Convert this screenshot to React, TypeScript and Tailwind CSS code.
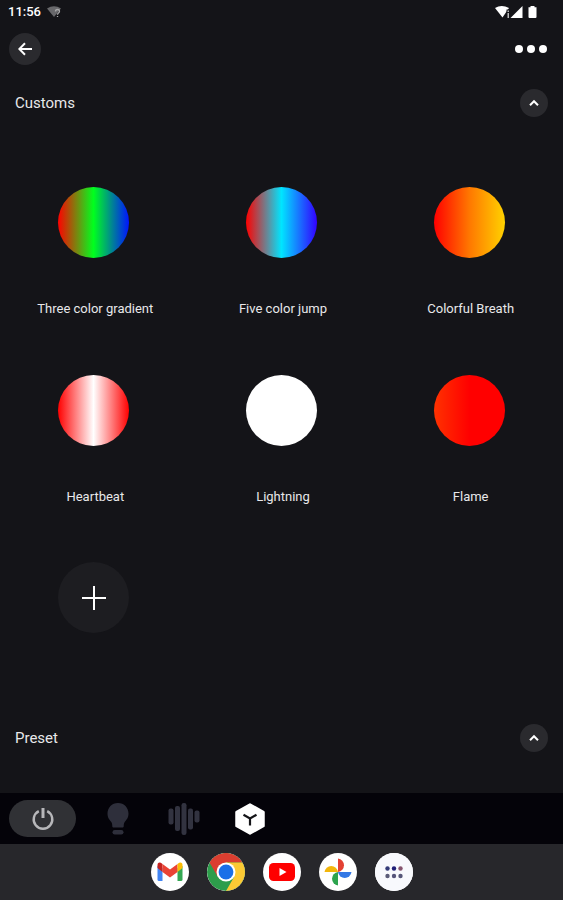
import { useState } from "react";

const effects = [
  { name: "Three color gradient", fill: "bg-[linear-gradient(90deg,#ff0000,#00ff1e_50%,#0014ff)]" },
  { name: "Five color jump", fill: "bg-[linear-gradient(90deg,#ff0000,#00e5ff_50%,#3200ff)]" },
  { name: "Colorful Breath", fill: "bg-[linear-gradient(90deg,#ff0000,#ff7800_50%,#ffd200)]" },
  { name: "Heartbeat", fill: "bg-[linear-gradient(90deg,#ff0000,#ffffff_50%,#ff0000)]" },
  { name: "Lightning", fill: "bg-white" },
  { name: "Flame", fill: "bg-[linear-gradient(90deg,#ff3200,#ff0000_50%,#ff0000)]" },
];

function StatusBar() {
  return (
    <div className="flex h-6 items-center px-2 text-white">
      <span className="text-[13px] leading-4 font-medium">11:56</span>
      <svg className="ml-1.5 h-3 w-[14px]" viewBox="0 0 14 12" aria-hidden="true">
        <path d="M0 2.5Q7-1.8 14 2.5L7 11Z" fill="#68686b" />
        <path d="M8.5 5.5q0-2 2-2t2 1.8q0 1-1 1.7t-1 1.8M10.5 10v1" fill="none" stroke="#a6a6a8" strokeWidth="1.3" />
      </svg>
      <svg className="ml-auto mr-[17px] h-[14px] w-[43px]" viewBox="0 0 43 14" aria-hidden="true">
        <path d="M0 3Q6.500-1 14 3L7.500 12.500Z" fill="#fff" />
        <path d="M11.500 4.500h3v9h-3z" fill="#141418" />
        <path d="M12.500 5.500h1.500v1.500h-1.500zM12.500 8h1.500v5h-1.500z" fill="#bbb" />
        <path d="M27.500 1v12h-12z" fill="#fff" />
        <path d="M35.500 1h4v1.300h2V12q0 1-1 1h-6q-1 0-1-1V2.300h2z" fill="#fff" />
      </svg>
    </div>
  );
}

function SectionHeader({ title, open, onToggle }: { title: string; open: boolean; onToggle: () => void }) {
  return (
    <div className="flex h-7 items-center justify-between px-[15px]">
      <h2 className="text-[15px] leading-5">{title}</h2>
      <button
        type="button"
        aria-label={`Toggle ${title}`}
        aria-expanded={open}
        onClick={onToggle}
        className="flex size-7 items-center justify-center rounded-full bg-[#2a2a2e]"
      >
        <svg className="h-2 w-3" viewBox="0 0 12 8" fill="none" stroke="#fff" strokeWidth="2" aria-hidden="true">
          <path d="M2 6.200 6 2.200l4 4" />
        </svg>
      </button>
    </div>
  );
}

function EffectGrid() {
  return (
    <div className="grid grid-cols-3">
      {effects.map((e) => (
        <button key={e.name} type="button" className="flex h-[188px] flex-col items-center pt-[58px]">
          <span className={`size-[71px] rounded-full ${e.fill}`} />
          <span className="mt-[43px] pl-[3px] text-[13px] leading-4 whitespace-nowrap">{e.name}</span>
        </button>
      ))}
      <div className="flex h-[188px] justify-center pt-[57px]">
        <button
          type="button"
          aria-label="Add effect"
          className="flex size-[71px] items-center justify-center rounded-full bg-[#1d1d21]"
        >
          <svg className="size-6" viewBox="0 0 24 24" stroke="#fff" strokeWidth="2" aria-hidden="true">
            <path d="M12 0v24M0 12h24" />
          </svg>
        </button>
      </div>
    </div>
  );
}

function Toolbar() {
  const tab = "flex h-9 w-[66px] items-center justify-center";
  return (
    <nav className="flex h-[51px] items-center bg-[#040309] px-[9px]">
      <button
        type="button"
        aria-label="Power"
        className="mr-[9px] flex h-[37px] w-[67px] items-center justify-center rounded-full bg-[#303135]"
      >
        <svg className="size-6" viewBox="0 0 24 24" fill="none" stroke="#b7b7ba" aria-hidden="true">
          <path d="M7.800 4.100A9.300 9.300 0 1 0 16.200 4.100" strokeWidth="2.400" />
          <path d="M12 1v10" strokeWidth="3" />
        </svg>
      </button>
      <button type="button" aria-label="Light" className={tab}>
        <svg className="h-8 w-[22px]" viewBox="0 0 22 32" fill="#2e2f3b" aria-hidden="true">
          <path d="M11 0C4.800 0 .5 4.700.5 10.500c0 4.500 2.200 6.500 3.800 8.500.9 1.200.9 2.500 1 4.200.1 1 .6 1.300 1.300 1.300h8.800c.7 0 1.200-.3 1.300-1.300.1-1.700.1-3 1-4.200 1.600-2 3.800-4 3.800-8.500C21.500 4.700 17.200 0 11 0Z" />
          <rect x="5.500" y="27" width="11" height="4.500" rx="2.200" />
        </svg>
      </button>
      <button type="button" aria-label="Music" className={tab}>
        <svg className="h-8 w-8" viewBox="0 0 32 32" fill="#323340" aria-hidden="true">
          <rect x=".5" y="5.500" width="5" height="16" rx="2" />
          <rect x="7" y="3" width="5" height="25" rx="2" />
          <rect x="13.500" y="0" width="5" height="32" rx="2.200" />
          <rect x="20" y="5.500" width="5" height="21" rx="2" />
          <rect x="26.500" y="7.500" width="5" height="12" rx="2" />
        </svg>
      </button>
      <button type="button" aria-label="Scenes" aria-current="page" className={tab}>
        <svg className="h-8 w-[30px]" viewBox="0 0 30 32" aria-hidden="true">
          <path d="M15 1.500 28.500 9v14L15 30.500 1.500 23V9Z" fill="#fff" stroke="#fff" strokeWidth="2.500" strokeLinejoin="round" />
          <path d="M8.500 11.800 15 15.500l6.500-3.700M15 15.500v7" fill="none" stroke="#141418" strokeWidth="2.200" />
        </svg>
      </button>
    </nav>
  );
}

function Dock() {
  const app = "size-[38px] overflow-hidden rounded-full bg-white";
  return (
    <footer className="flex h-14 items-center justify-center gap-[18px] bg-[#27272b]">
      <button type="button" aria-label="Gmail" className={app}>
        <svg className="size-[38px]" viewBox="0 0 38 38" aria-hidden="true">
          <path d="M6.500 13v13.500q0 1.500 1.500 1.500h3.500V15Z" fill="#4285f4" />
          <path d="M26.500 15v13H30q1.500 0 1.500-1.500V13Z" fill="#34a853" />
          <path d="M6.500 12.500v2.500l5 4v-8l-1.700-1.200q-3.300-.9-3.300 2.700Z" fill="#c5221f" />
          <path d="m11.500 11 7.500 5.600 7.500-5.600v8L19 24.600 11.500 19Z" fill="#ea4335" />
          <path d="M26.500 11v8l5-4v-2.500q0-3.600-3.300-2.700Z" fill="#fbbc04" />
        </svg>
      </button>
      <button type="button" aria-label="Chrome" className={app}>
        <svg className="size-[38px]" viewBox="0 0 38 38" aria-hidden="true">
          <circle cx="19" cy="19" r="19" fill="#2d9d4b" />
          <path d="M19 19 2.500 9.500A19 19 0 0 1 35.500 9.500H19Z" fill="#db3e30" />
          <path d="M2.500 9.500 10.800 23.800 19 9.500Z" fill="#db3e30" />
          <path d="M19 9.500h16.500A19 19 0 0 1 19 38l8.200-14.300Z" fill="#fcc934" />
          <circle cx="19" cy="19" r="9.500" fill="#fff" />
          <circle cx="19" cy="19" r="7.400" fill="#1a6fe8" />
        </svg>
      </button>
      <button type="button" aria-label="YouTube" className={app}>
        <svg className="size-[38px]" viewBox="0 0 38 38" aria-hidden="true">
          <rect x="6" y="10" width="26" height="18" rx="4.500" fill="#f00" />
          <path d="m16.500 15 7 4-7 4Z" fill="#fff" />
        </svg>
      </button>
      <button type="button" aria-label="Photos" className={app}>
        <svg className="size-[38px]" viewBox="0 0 38 38" aria-hidden="true">
          <path d="M19 5.500a6.800 6.800 0 0 1 0 13.500Z" fill="#e34133" />
          <path d="M5.500 19a6.800 6.800 0 0 1 13.500 0Z" fill="#f3b60b" />
          <path d="M19 32.500a6.800 6.800 0 0 1 0-13.500Z" fill="#2da44e" />
          <path d="M32.500 19a6.800 6.800 0 0 1-13.500 0Z" fill="#3478e5" />
        </svg>
      </button>
      <button type="button" aria-label="All apps" className={app}>
        <svg className="size-[38px]" viewBox="0 0 38 38" aria-hidden="true">
          <rect width="38" height="38" fill="#f8f9fd" />
          <circle cx="12.500" cy="15.500" r="2.200" fill="#343b78" />
          <circle cx="19" cy="15.500" r="2.200" fill="#201f78" />
          <circle cx="25.500" cy="15.500" r="2.200" fill="#86556f" />
          <circle cx="12.500" cy="23" r="2.200" fill="#5b5c79" />
          <circle cx="19" cy="23" r="2.200" fill="#55547a" />
          <circle cx="25.500" cy="23" r="2.200" fill="#565779" />
        </svg>
      </button>
    </footer>
  );
}

export default function App() {
  const [customsOpen, setCustomsOpen] = useState(true);
  const [presetOpen, setPresetOpen] = useState(true);
  return (
    <div className="flex min-h-screen flex-col bg-[#141418] font-[Roboto,sans-serif] text-[#e8e8ea]">
      <StatusBar />
      <header className="flex h-[50px] items-center justify-between px-[9px]">
        <button
          type="button"
          aria-label="Back"
          className="flex size-8 items-center justify-center rounded-full bg-[#2a2a2e]"
        >
          <svg className="size-[14px]" viewBox="0 0 14 14" fill="none" stroke="#fff" strokeWidth="2" aria-hidden="true">
            <path d="M14 7H1.500M7 1.300 1.300 7 7 12.700" />
          </svg>
        </button>
        <button type="button" aria-label="More options" className="flex h-8 items-center gap-1 px-[7px]">
          <span className="size-2 rounded-full bg-white" />
          <span className="size-2 rounded-full bg-white" />
          <span className="size-2 rounded-full bg-white" />
        </button>
      </header>
      <main className="flex-1 pt-[15px] pb-5">
        <SectionHeader title="Customs" open={customsOpen} onToggle={() => setCustomsOpen(!customsOpen)} />
        <div className="pt-3 pb-[31px]">{customsOpen && <EffectGrid />}</div>
        <SectionHeader title="Preset" open={presetOpen} onToggle={() => setPresetOpen(!presetOpen)} />
      </main>
      <Toolbar />
      <Dock />
    </div>
  );
}
